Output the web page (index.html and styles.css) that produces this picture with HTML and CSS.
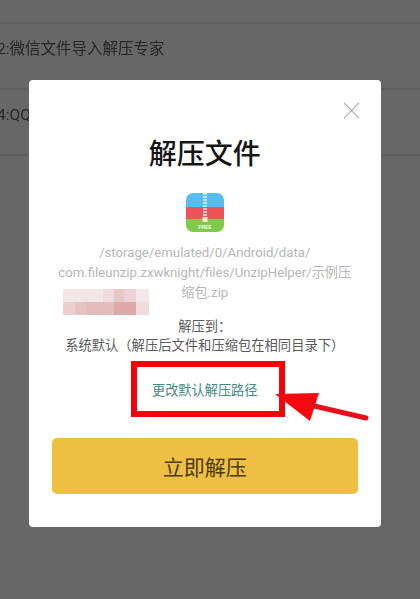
FILE: index.html
```html
<!DOCTYPE html>
<html lang="zh-CN">
<head>
<meta charset="utf-8">
<title>解压文件</title>
<link rel="stylesheet" href="styles.css">
</head>
<body>
<div class="list">
  <div class="row row-first"><span class="row-sub">|</span></div>
  <div class="row"><span class="row-title">2:微信文件导入解压专家</span><span class="row-sub">|</span></div>
  <div class="row"><span class="row-title">4:QQ文件导入解压专家</span><span class="row-sub">|</span></div>
</div>
<div class="overlay">
  <section class="modal">
    <svg class="close" viewBox="0 0 18 18" aria-label="关闭"><path d="M1 1 17 17M17 1 1 17"/></svg>
    <h1 class="title">解压文件</h1>
    <svg class="app-icon" viewBox="0 0 38 39">
      <defs><clipPath id="round"><rect width="38" height="39" rx="7"/></clipPath></defs>
      <g clip-path="url(#round)">
        <rect width="38" height="14" fill="#55bdf6"/>
        <rect y="14" width="38" height="12" fill="#ee5358"/>
        <rect y="26" width="38" height="13" fill="#7ecb4a"/>
        <path d="M17 1h4M17 4h4M17 7h4M17 10h4M17 13h4M17 16h4M17 19h4M17 22h4" stroke="#e8f4f8" stroke-width="1.6"/>
        <rect x="16.5" y="24" width="5" height="5" fill="#e8f4e0"/>
        <text class="free" x="19" y="36" text-anchor="middle">FREE</text>
      </g>
    </svg>
    <p class="path">/storage/emulated/0/Android/data/<br>com.fileunzip.zxwknight/files/UnzipHelper/示例压<br>缩包.zip</p>
    <div class="mosaic"></div>
    <p class="dest">解压到：<br>系统默认（解压后文件和压缩包在相同目录下）</p>
    <a class="change">更改默认解压路径</a>
    <button class="primary" type="button">立即解压</button>
  </section>
  <div class="mark-box"></div>
  <svg class="mark-arrow" viewBox="0 0 100 36">
    <path d="M1 7 45 6 36 34Z" fill="#f50a0f"/>
    <path d="M36 18 92 31" stroke="#e5101a" stroke-width="5" stroke-linecap="round"/>
  </svg>
</div>
</body>
</html>
```
FILE: styles.css
```css
* { box-sizing: border-box; }
html, body { margin: 0; height: 100%; }
body {
  position: relative;
  width: 420px;
  height: 599px;
  overflow: hidden;
  background: #676767;
  font-family: "Roboto", "Noto Sans CJK SC", sans-serif;
  filter: blur(0.4px);
}
.list { display: flex; flex-direction: column; }
.row {
  height: 66px;
  padding: 14px 0 0;
  margin-left: -3px;
  border-bottom: 2px solid #5e5e5e;
  display: flex;
  flex-direction: column;
  white-space: nowrap;
}
.row-first { height: 24px; padding: 0; }
.row-title { font-size: 15.5px; line-height: 22px; color: #262626; }
.row-sub { font-size: 11px; line-height: 14px; margin-top: 5px; color: #444444; }
.row-first .row-sub { margin-top: 0; }
.overlay { position: absolute; inset: 0; }
.modal {
  position: absolute;
  left: 28.5px;
  top: 80px;
  width: 352.5px;
  height: 447px;
  padding: 57px 20px 0;
  background: #ffffff;
  border-radius: 4px;
  display: flex;
  flex-direction: column;
  align-items: center;
  text-align: center;
}
.close {
  position: absolute;
  right: 21px;
  top: 22px;
  width: 17px;
  height: 17px;
  fill: none;
  stroke: #a8a8a8;
  stroke-width: 1.1;
}
.title {
  margin: 0;
  font-size: 28px;
  line-height: 36px;
  font-weight: 500;
  color: #151515;
}
.app-icon { display: block; width: 38px; height: 39px; margin-top: 20px; }
.free { font: 700 5px "Liberation Sans", sans-serif; fill: #f4fbe8; }
.path {
  margin: 11px -10px 0;
  font-size: 13.2px;
  line-height: 20px;
  color: #b6b6b6;
  white-space: nowrap;
}
.mosaic {
  position: absolute;
  left: 34px;
  top: 209px;
  width: 86px;
  height: 26px;
  background:
    linear-gradient(90deg, #f2e6e6 0 46%, #eedddd 46% 59%, #e8c7c7 59% 71%, #edd3d3 71% 85%, #f2e8e8 85%) top / 100% 50% no-repeat,
    linear-gradient(90deg, #ebcfcf 0 14%, #e7c2c2 14% 27%, #e5bcbc 27% 59%, #dda9a9 59% 85%, #efdcdc 85%) bottom / 100% 50% no-repeat;
}
.dest {
  margin: 14px 0 0;
  font-size: 13.3px;
  line-height: 19px;
  color: #5a5a5a;
  white-space: nowrap;
}
.change {
  margin-top: 27px;
  font-size: 13.2px;
  line-height: 18px;
  color: #3f8b80;
}
.primary {
  align-self: stretch;
  height: 56px;
  margin: 38px 3px 0;
  border: 0;
  border-radius: 5px;
  background: #eec042;
  font-family: inherit;
  font-size: 21px;
  color: #4a3a14;
}
.mark-box {
  position: absolute;
  left: 131px;
  top: 361px;
  width: 154px;
  height: 56px;
  border: 6px solid #f4040a;
}
.mark-arrow {
  position: absolute;
  left: 274px;
  top: 387px;
  width: 100px;
  height: 36px;
}
```
